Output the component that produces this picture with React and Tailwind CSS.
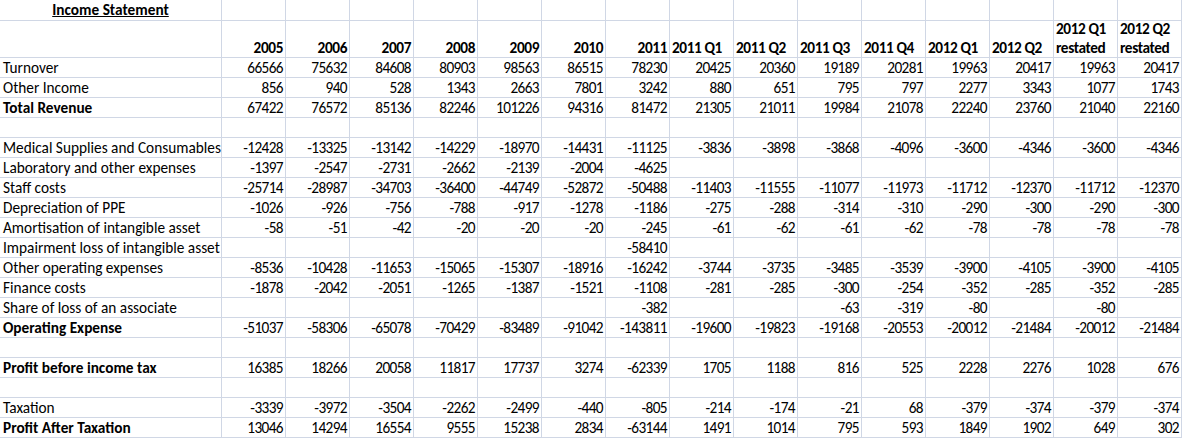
import React from "react";

const cols = ["2005","2006","2007","2008","2009","2010","2011","2011 Q1","2011 Q2","2011 Q3","2011 Q4","2012 Q1","2012 Q2","2012 Q1 restated","2012 Q2 restated"];

const rows = [
  ["Turnover", false, ["66566","75632","84608","80903","98563","86515","78230","20425","20360","19189","20281","19963","20417","19963","20417"]],
  ["Other Income", false, ["856","940","528","1343","2663","7801","3242","880","651","795","797","2277","3343","1077","1743"]],
  ["Total Revenue", true, ["67422","76572","85136","82246","101226","94316","81472","21305","21011","19984","21078","22240","23760","21040","22160"]],
  ["", false, []],
  ["Medical Supplies and Consumables", false, ["-12428","-13325","-13142","-14229","-18970","-14431","-11125","-3836","-3898","-3868","-4096","-3600","-4346","-3600","-4346"]],
  ["Laboratory and other expenses", false, ["-1397","-2547","-2731","-2662","-2139","-2004","-4625","","","","","","","",""]],
  ["Staff costs", false, ["-25714","-28987","-34703","-36400","-44749","-52872","-50488","-11403","-11555","-11077","-11973","-11712","-12370","-11712","-12370"]],
  ["Depreciation of PPE", false, ["-1026","-926","-756","-788","-917","-1278","-1186","-275","-288","-314","-310","-290","-300","-290","-300"]],
  ["Amortisation of intangible asset", false, ["-58","-51","-42","-20","-20","-20","-245","-61","-62","-61","-62","-78","-78","-78","-78"]],
  ["Impairment loss of intangible asset", false, ["","","","","","","-58410","","","","","","","",""]],
  ["Other operating expenses", false, ["-8536","-10428","-11653","-15065","-15307","-18916","-16242","-3744","-3735","-3485","-3539","-3900","-4105","-3900","-4105"]],
  ["Finance costs", false, ["-1878","-2042","-2051","-1265","-1387","-1521","-1108","-281","-285","-300","-254","-352","-285","-352","-285"]],
  ["Share of loss of an associate", false, ["","","","","","","-382","","","-63","-319","-80","","-80",""]],
  ["Operating Expense", true, ["-51037","-58306","-65078","-70429","-83489","-91042","-143811","-19600","-19823","-19168","-20553","-20012","-21484","-20012","-21484"]],
  ["", false, []],
  ["Profit before income tax", true, ["16385","18266","20058","11817","17737","3274","-62339","1705","1188","816","525","2228","2276","1028","676"]],
  ["", false, []],
  ["Taxation", false, ["-3339","-3972","-3504","-2262","-2499","-440","-805","-214","-174","-21","68","-379","-374","-379","-374"]],
  ["Profit After Taxation", true, ["13046","14294","16554","9555","15238","2834","-63144","1491","1014","795","593","1849","1902","649","302"]],
];

const font = { fontFamily: "Carlito, Calibri, Lato, 'Liberation Sans', sans-serif" };

export default function App() {
  return (
    <div className="w-[1182px] h-[438px] bg-white text-black overflow-hidden" style={font}>
      <div className="grid grid-cols-[222px_repeat(15,64px)] text-[15.3px] leading-[18px]">
        <div className="h-[21px] border-r border-b border-[#d0d7e5] flex items-end justify-center pb-[1px]">
          <span className="font-bold underline">Income Statement</span>
        </div>
        {cols.map((c, i) => (
          <div key={"r1" + i} className="h-[21px] border-r border-b border-[#d0d7e5]" />
        ))}
        <div className="h-[37px] border-r border-b border-[#d0d7e5]" />
        {cols.map((c, i) => (
          <div
            key={"h" + i}
            className={
              "h-[37px] border-r border-b border-[#d0d7e5] flex items-end font-bold leading-[19px] whitespace-nowrap tracking-[-0.4px] " +
              (i < 7 ? "justify-end pr-[2px] text-right" : "justify-start pl-[2px] text-left")
            }
          >
            <span className="whitespace-pre-line">{c.includes("restated") ? c.replace(" restated", "\nrestated") : c}</span>
          </div>
        ))}
        {rows.map(([label, bold, vals], r) => (
          <React.Fragment key={r}>
            <div className={"h-[20px] border-r border-b border-[#d0d7e5] flex items-end pl-[3px] whitespace-nowrap " + (bold ? "font-bold" : "")}>
              {label}
            </div>
            {cols.map((_, i) => (
              <div key={i} className="h-[20px] border-r border-b border-[#d0d7e5] flex items-end justify-end pr-[2px] whitespace-nowrap tracking-[-0.6px]">
                {vals[i] || ""}
              </div>
            ))}
          </React.Fragment>
        ))}
      </div>
    </div>
  );
}
